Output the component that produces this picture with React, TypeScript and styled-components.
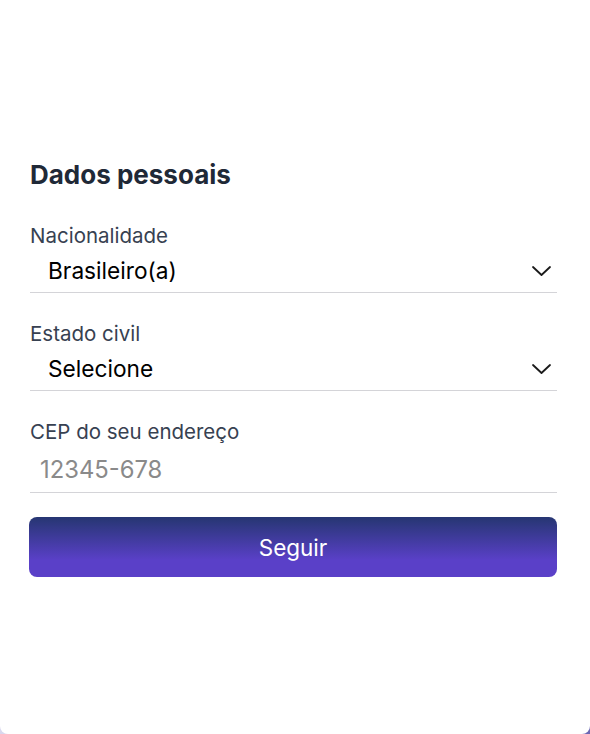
import styled, { createGlobalStyle } from "styled-components";

const GlobalStyle = createGlobalStyle`
    * { box-sizing: border-box; }
    html, body {
        margin: 0;
        padding: 0;
        height: 100%;
    }
    body {
        background: linear-gradient(to right, #d9d8ee, #6c68b4);
        font-family: Inter, "Noto Sans", "Liberation Sans", sans-serif;
    }
`;

const Card = styled.div`
    width: 590px;
    height: 734px;
    background: #ffffff;
    border-radius: 0 0 8px 8px;
    padding: 160px 33px 0 29px;
`;

const Form = styled.form`
    display: flex;
    flex-direction: column;
`;

const Title = styled.h1`
    margin: 0 0 34px 1px;
    font-size: 26px;
    line-height: 30px;
    font-weight: 700;
    color: #1f2937;
`;

const Field = styled.div<{ last?: boolean }>`
    display: flex;
    flex-direction: column;
    margin-bottom: ${(p) => (p.last ? "24px" : "29px")};
`;

const Label = styled.label`
    font-size: 20.5px;
    line-height: 24px;
    color: #374151;
    padding-left: 1px;
`;

const SelectWrap = styled.div`
    position: relative;
    margin-left: 1px;
    border-bottom: 1px solid #d4d4d8;
`;

const Select = styled.select`
    appearance: none;
    -webkit-appearance: none;
    width: 100%;
    height: 44px;
    border: none;
    outline: none;
    background: transparent;
    padding: 0 0 0 18px;
    font-family: inherit;
    font-size: 22.7px;
    color: #000;
`;

const Chevron = styled.svg`
    position: absolute;
    right: 6px;
    top: 18px;
    pointer-events: none;
`;

const Input = styled.input`
    height: 49px;
    margin-left: 1px;
    border: none;
    border-bottom: 1px solid #d4d4d8;
    outline: none;
    padding: 2px 0 0 10px;
    font-family: inherit;
    font-size: 23.8px;
    color: #000;
    &::placeholder {
        color: #8a8a8a;
    }
`;

const Button = styled.button`
    height: 60px;
    border: none;
    border-radius: 8px;
    background: linear-gradient(to bottom, #263672 0%, #5a40c8 72%, #5a40c8 100%);
    color: #ffffff;
    font-family: inherit;
    font-size: 22.5px;
    cursor: pointer;
`;

function ChevronDown() {
    return (
        <Chevron width="19" height="10" viewBox="0 0 19 10" fill="none">
            <path d="M1 1 L9.5 9 L18 1" stroke="#1a1a1a" strokeWidth="1.8" strokeLinecap="round" strokeLinejoin="round" />
        </Chevron>
    );
}

function App() {
    return (
        <>
            <GlobalStyle />
            <Card>
                <Form onSubmit={(e) => e.preventDefault()}>
                    <Title>Dados pessoais</Title>
                    <Field>
                        <Label htmlFor="nacionalidade">Nacionalidade</Label>
                        <SelectWrap>
                            <Select id="nacionalidade" defaultValue="br">
                                <option value="br">Brasileiro(a)</option>
                                <option value="es">Estrangeiro(a)</option>
                            </Select>
                            <ChevronDown />
                        </SelectWrap>
                    </Field>
                    <Field>
                        <Label htmlFor="estado-civil">Estado civil</Label>
                        <SelectWrap>
                            <Select id="estado-civil" defaultValue="">
                                <option value="">Selecione</option>
                                <option value="solteiro">Solteiro(a)</option>
                                <option value="casado">Casado(a)</option>
                            </Select>
                            <ChevronDown />
                        </SelectWrap>
                    </Field>
                    <Field last>
                        <Label htmlFor="cep">CEP do seu endereço</Label>
                        <Input id="cep" placeholder="12345-678" />
                    </Field>
                    <Button type="submit">Seguir</Button>
                </Form>
            </Card>
        </>
    );
}

export default App;
